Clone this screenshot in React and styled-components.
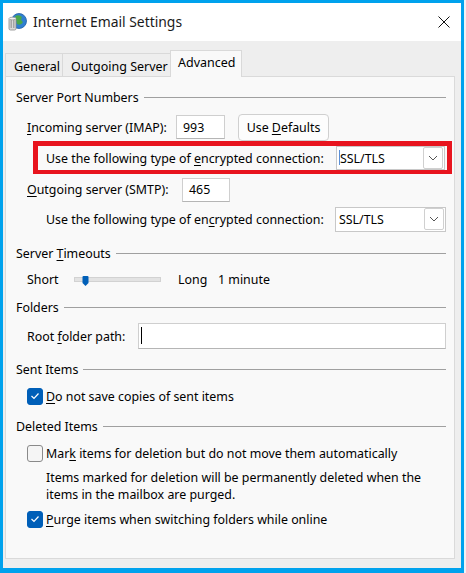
import React from 'react'
import styled, { createGlobalStyle } from 'styled-components'

const Global = createGlobalStyle`
  html, body { margin: 0; padding: 0; background: #eef2f5; }
  body { font-family: "Noto Sans", "Open Sans", sans-serif; font-size: 12.4px; color: #000; }
`

const Window = styled.div`
  width: 464px;
  height: 573px;
  box-sizing: border-box;
  border: 3px solid #00a2ed;
  border-bottom-width: 5px;
  display: flex;
  flex-direction: column;
  background: #eeeeee;
`

const TitleBar = styled.div`
  height: 38px;
  background: #fff;
  display: flex;
  align-items: center;
  padding: 0 11px 0 4px;
  gap: 6px;
`

const Title = styled.div`
  flex: 1;
  font-size: 13.9px;
  color: #1a1a1a;
  padding-bottom: 1px;
`

const Body = styled.div`
  flex: 1;
  padding: 9px 6px 9px 2px;
  display: flex;
  flex-direction: column;
`

const TabStrip = styled.div`
  display: flex;
  align-items: flex-end;
  height: 27px;
  margin-bottom: -1px;
  position: relative;
  z-index: 1;
`

const Tab = styled.div`
  box-sizing: border-box;
  width: ${p => p.w}px;
  height: ${p => (p.active ? 27 : 24)}px;
  padding: ${p => (p.active ? '3px 0 0 7px' : '4px 0 0 8px')};
  background: ${p => (p.active ? '#f9f9f9' : '#eeeeee')};
  border: 1px solid #d9d9d9;
  border-bottom: ${p => (p.active ? 'none' : '1px solid #d9d9d9')};
  margin-left: ${p => (p.first ? 0 : -1)}px;
  font-size: 12.5px;
`

const Panel = styled.div`
  flex: 1;
  background: #f9f9f9;
  border: 1px solid #dadada;
  padding: 11px 8px 0 10px;
  display: flex;
  flex-direction: column;
  align-items: stretch;
`

const Header = styled.div`
  height: 18px;
  margin-top: ${p => p.mt || 0}px;
  display: flex;
  align-items: center;
  gap: 5px;
  &::after {
    content: '';
    flex: 1;
    height: 1px;
    background: #a0a0a0;
  }
`

const Row = styled.div`
  height: ${p => p.h}px;
  margin-top: ${p => p.mt || 0}px;
  padding-left: ${p => p.indent}px;
  display: flex;
  align-items: center;
`

const Label = styled.span`
  width: ${p => (p.w ? `${p.w}px` : 'auto')};
  flex-shrink: 0;
  white-space: nowrap;
`

const Key = styled.span`
  text-decoration: underline;
  text-underline-offset: 2px;
`

const TextBox = styled.div`
  box-sizing: border-box;
  width: ${p => (p.w ? `${p.w}px` : 'auto')};
  flex: ${p => (p.w ? '0 0 auto' : 1)};
  height: ${p => p.h || 24}px;
  background: #fff;
  border: 1px solid #cfcfcf;
  border-bottom-color: #b5b5b5;
  padding-left: 6px;
  display: flex;
  align-items: center;
  position: relative;
`

const Caret = styled.span`
  position: absolute;
  left: 2px;
  top: 3px;
  bottom: 4px;
  width: 1px;
  background: ${p => p.color};
`

const Button = styled.div`
  box-sizing: border-box;
  margin-left: 13px;
  width: 91px;
  height: 27px;
  border: 1px solid #d0d0d0;
  border-radius: 4px;
  background: #fdfdfd;
  display: flex;
  align-items: center;
  justify-content: center;
`

const RedBox = styled.div`
  box-sizing: border-box;
  align-self: flex-start;
  margin-left: 17px;
  width: 419px;
  height: 33px;
  border: 5px solid #e8141e;
  border-bottom-width: 4px;
  padding: 0 2px 0 8px;
  display: flex;
  align-items: center;
`

const Select = styled.div`
  box-sizing: border-box;
  margin-left: auto;
  width: ${p => p.w}px;
  height: ${p => p.h}px;
  background: #fff;
  border: 1px solid #c8c8c8;
  display: flex;
  align-items: center;
  padding: 0 1px 0 3px;
  position: relative;
`

const SelectText = styled.span`
  flex: 1;
`

const Drop = styled.div`
  box-sizing: border-box;
  width: 20px;
  height: 22px;
  border: 1px solid #d0d0d0;
  border-radius: 2px;
  display: flex;
  align-items: center;
  justify-content: center;
`

const Track = styled.div`
  width: 87px;
  height: 5px;
  margin-right: 17px;
  background: #e3e3e3;
  border: 1px solid #d2d2d2;
  box-sizing: border-box;
  position: relative;
`

const Thumb = styled.svg`
  position: absolute;
  left: 7px;
  top: -2px;
`

const Box = styled.div`
  box-sizing: border-box;
  width: 16px;
  height: 17px;
  margin-right: 3px;
  border-radius: 3px;
  background: ${p => (p.checked ? '#005fb8' : '#f5f5f5')};
  border: 1px solid ${p => (p.checked ? '#005fb8' : '#8a8a8a')};
  display: flex;
  align-items: center;
  justify-content: center;
`

const Para = styled.div`
  margin-top: 6px;
  padding-left: 30px;
  line-height: 17px;
`

const Check = ({ checked }) => (
  <Box checked={checked}>
    {checked && (
      <svg width="10" height="8" viewBox="0 0 10 8">
        <polyline points="1.5,4 4,6.5 8.5,1.5" fill="none" stroke="#fff" strokeWidth="1.2" />
      </svg>
    )}
  </Box>
)

const Chevron = () => (
  <Drop>
    <svg width="10" height="6" viewBox="0 0 10 6">
      <polyline points="1,1 5,5 9,1" fill="none" stroke="#555" strokeWidth="1" />
    </svg>
  </Drop>
)

const AppIcon = () => (
  <svg width="20" height="20" viewBox="0 0 20 20">
    <circle cx="12" cy="9" r="7.5" fill="#2f7fd0" />
    <path d="M8 4 Q12 2 15 5 Q13 8 16 10 Q14 14 10 12 Z" fill="#4aa84a" />
    <circle cx="12" cy="9" r="7.5" fill="none" stroke="#1d5fa6" strokeWidth="0.8" />
    <rect x="2" y="6" width="7" height="12" rx="1.5" fill="#d9d9d9" stroke="#8a8a8a" strokeWidth="0.8" />
    <rect x="3.5" y="8" width="1.5" height="8" fill="#a5a5a5" />
    <rect x="6" y="8" width="1.5" height="8" fill="#a5a5a5" />
    <ellipse cx="5.5" cy="6.5" rx="3.5" ry="1.3" fill="#f2f2f2" stroke="#8a8a8a" strokeWidth="0.6" />
  </svg>
)

export default function App() {
  return (
    <>
      <Global />
      <Window>
        <TitleBar>
          <AppIcon />
          <Title>Internet Email Settings</Title>
          <svg width="12" height="12" viewBox="0 0 12 12">
            <path d="M0.5 0.5 L11.5 11.5 M11.5 0.5 L0.5 11.5" stroke="#111" strokeWidth="1" />
          </svg>
        </TitleBar>
        <Body>
          <TabStrip>
            <Tab first w={58}>General</Tab>
            <Tab w={109}>Outgoing Server</Tab>
            <Tab active w={72}>Advanced</Tab>
          </TabStrip>
          <Panel>
            <Header><span>Server Port Numbers</span></Header>
            <Row h={28} mt={7} indent={11}>
              <Label w={149}><Key>I</Key>ncoming server (IMAP):</Label>
              <TextBox w={49}>993</TextBox>
              <Button><span>Use <Key>D</Key>efaults</span></Button>
            </Row>
            <RedBox>
              <Label>Use the following type of <Key>e</Key>ncrypted connection:</Label>
              <Select w={109} h={24}>
                <Caret color="#5b8fd6" />
                <SelectText>SSL/TLS</SelectText>
                <Chevron />
              </Select>
            </RedBox>
            <Row h={27} mt={2} indent={11}>
              <Label w={155}><Key>O</Key>utgoing server (SMTP):</Label>
              <TextBox w={48}>465</TextBox>
            </Row>
            <Row h={28} mt={2} indent={30}>
              <Label>Use the following type of en<Key>c</Key>rypted connection:</Label>
              <Select w={111} h={25}>
                <SelectText>SSL/TLS</SelectText>
                <Chevron />
              </Select>
            </Row>

            <Header mt={11}><span>Server <Key>T</Key>imeouts</span></Header>
            <Row h={22} mt={6} indent={11}>
              <Label w={47}>Short</Label>
              <Track>
                <Thumb width="7" height="10" viewBox="0 0 7 10">
                  <path d="M0.5 1 Q0.5 0 1.5 0 L5.5 0 Q6.5 0 6.5 1 L6.5 7 L3.5 10 L0.5 7 Z" fill="#005fb8" />
                </Thumb>
              </Track>
              <Label w={40}>Long</Label>
              <Label>1 minute</Label>
            </Row>

            <Header mt={8}><span>Folders</span></Header>
            <Row h={28} mt={6} indent={11}>
              <Label w={111}>Root <Key>f</Key>older path:</Label>
              <TextBox h={26}>
                <Caret color="#000" />
              </TextBox>
            </Row>

            <Header mt={10}><span>Sent Items</span></Header>
            <Row h={20} mt={8} indent={11}>
              <Check checked />
              <Label><Key>D</Key>o not save copies of sent items</Label>
            </Row>

            <Header mt={11}><span>Deleted Items</span></Header>
            <Row h={20} mt={8} indent={11}>
              <Check />
              <Label>Mar<Key>k</Key> items for deletion but do not move them automatically</Label>
            </Row>
            <Para>
              Items marked for deletion will be permanently deleted when the
              <br />
              items in the mailbox are purged.
            </Para>
            <Row h={20} mt={6} indent={11}>
              <Check checked />
              <Label><Key>P</Key>urge items when switching folders while online</Label>
            </Row>
          </Panel>
        </Body>
      </Window>
    </>
  )
}
